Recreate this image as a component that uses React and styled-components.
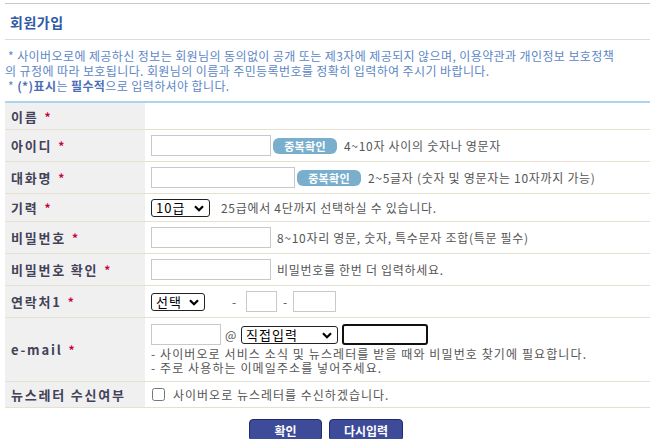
import React from 'react'
import styled, { createGlobalStyle } from 'styled-components'

const GlobalStyle = createGlobalStyle`
  body {
    margin: 0;
    background: #fff;
    font-family: "Noto Sans CJK KR", "Liberation Sans", sans-serif;
  }
`

const Page = styled.div`
  width: 645px;
  margin: 3px 0 0 5px;
  border-top: 1px solid #c8c8c8;
`

const TitleBar = styled.div`
  height: 35px;
  display: flex;
  align-items: center;
  padding-left: 5px;
  border-bottom: 1px solid #dcdcdc;

  h2 {
    margin: 0;
    font-size: 14px;
    letter-spacing: 0.5px;
    font-weight: bold;
    color: #2f5aa6;
  }
`

const Notice = styled.div`
  padding: 8px 0 8px 0;
  font-size: 12px;
  line-height: 15px;
  color: #5b87c6;
  white-space: nowrap;
  letter-spacing: 0.4px;

  b {
    font-weight: bold;
    color: #4a6fb5;
  }
`

const Table = styled.div`
  border-top: 2px solid #a9d6ea;
  display: grid;
  grid-template-columns: 140px 1fr;
`

const Label = styled.div`
  height: ${p => p.h}px;
  box-sizing: border-box;
  background: #f0f0f0;
  border-bottom: 1px solid #e6e0d2;
  display: flex;
  align-items: center;
  padding-left: 6px;
  font-size: 13px;
  font-weight: bold;
  letter-spacing: 1.8px;
  color: #424258;
  white-space: nowrap;
`

const Star = styled.span`
  color: #c8003c;
  margin-left: 6px;
  font-size: 12px;
`

const Cell = styled.div`
  height: ${p => p.h}px;
  border-bottom: 1px solid #e6e0d2;
  display: flex;
  align-items: ${p => (p.top ? 'flex-start' : 'center')};
  flex-direction: ${p => (p.top ? 'column' : 'row')};
  padding-left: 6px;
  padding-top: ${p => (p.top ? '6px' : '0')};
  box-sizing: border-box;
  font-size: 12px;
  letter-spacing: 0.7px;
  color: #555;
  white-space: nowrap;
`

const Line = styled.div`
  display: flex;
  align-items: center;
`

const Hint = styled.span`
  margin-left: ${p => p.gap || 6}px;
`

const TextBox = styled.input`
  width: ${p => p.w}px;
  height: 21px;
  box-sizing: border-box;
  border: 1px solid ${p => (p.focus ? '#111' : '#c9c9c9')};
  border-width: ${p => (p.focus ? '2px' : '1px')};
  border-radius: ${p => (p.focus ? '3px' : '0')};
  padding: 0 3px;
  outline: none;
  font-size: 12px;
`

const CheckButton = styled.button`
  height: 16px;
  width: 64px;
  margin-left: 2px;
  border: none;
  border-radius: 6px;
  background: #79afcd;
  color: #fff;
  font-family: inherit;
  font-size: 11px;
  font-weight: bold;
  letter-spacing: 0.3px;
  padding: 0;
  line-height: 16px;
`

const SelectWrap = styled.span`
  position: relative;
  display: inline-flex;
  width: ${p => p.w}px;
  height: 18px;
  box-sizing: border-box;
  border: 1px solid #222;
  border-radius: 3px;
  background: #fff;

  svg {
    position: absolute;
    right: 5px;
    top: 5px;
    pointer-events: none;
  }
`

const NativeSelect = styled.select`
  appearance: none;
  width: 100%;
  height: 100%;
  border: none;
  outline: none;
  background: transparent;
  padding: 0 0 0 4px;
  font-family: "Noto Sans CJK KR", sans-serif;
  font-size: 13px;
  line-height: 16px;
  letter-spacing: 1px;
  color: #000;
`

function Select({ w, value }) {
  return (
    <SelectWrap w={w}>
      <NativeSelect defaultValue={value}>
        <option>{value}</option>
      </NativeSelect>
      <svg width="10" height="7" viewBox="0 0 10 7">
        <path d="M1 1.2 L5 5.2 L9 1.2" fill="none" stroke="#000" strokeWidth="2.2" />
      </svg>
    </SelectWrap>
  )
}

const Dash = styled.span`
  margin-left: ${p => p.l}px;
  margin-right: ${p => p.r}px;
  color: #555;
`

const EmailNote = styled.div`
  margin-top: 2px;
  line-height: 14px;
  letter-spacing: 1.1px;
`

const Check = styled.input`
  width: 13px;
  height: 13px;
  margin: 0 8px 0 1px;
`

const CheckText = styled.span`
  letter-spacing: 1px;
`

const Actions = styled.div`
  display: flex;
  justify-content: center;
  gap: 7px;
  margin-top: 11px;
  padding-right: 3px;
`

const ActionButton = styled.button`
  width: ${p => p.w}px;
  height: 22px;
  border: 1px solid #1f2b6b;
  border-radius: 4px;
  background: #3d4b99;
  color: #fff;
  font-family: inherit;
  font-size: 12px;
  font-weight: bold;
  padding: 0;
`

function Row({ label, star = true, h, top, children }) {
  return (
    <>
      <Label h={h}>
        {label}
        {star && <Star>*</Star>}
      </Label>
      <Cell h={h} top={top}>{children}</Cell>
    </>
  )
}

export default function App() {
  return (
    <>
      <GlobalStyle />
      <Page>
        <TitleBar>
          <h2>회원가입</h2>
        </TitleBar>
        <Notice>
          &nbsp;* 사이버오로에 제공하신 정보는 회원님의 동의없이 공개 또는 제3자에 제공되지 않으며, 이용약관과 개인정보 보호정책
          <br />
          의 규정에 따라 보호됩니다. 회원님의 이름과 주민등록번호를 정확히 입력하여 주시기 바랍니다.
          <br />
          &nbsp;* <b>(*)표시</b>는 <b>필수적</b>으로 입력하셔야 합니다.
        </Notice>
        <Table>
          <Row label="이름" h={27} />
          <Row label="아이디" h={32}>
            <TextBox w={120} />
            <CheckButton>중복확인</CheckButton>
            <Hint gap={7}>4~10자 사이의 숫자나 영문자</Hint>
          </Row>
          <Row label="대화명" h={32}>
            <TextBox w={144} />
            <CheckButton>중복확인</CheckButton>
            <Hint gap={7}>2~5글자 (숫자 및 영문자는 10자까지 가능)</Hint>
          </Row>
          <Row label="기력" h={28}>
            <Select w={59} value="10급" />
            <Hint gap={11}>25급에서 4단까지 선택하실 수 있습니다.</Hint>
          </Row>
          <Row label="비밀번호" h={32}>
            <TextBox w={120} type="password" />
            <Hint>8~10자리 영문, 숫자, 특수문자 조합(특문 필수)</Hint>
          </Row>
          <Row label="비밀번호 확인" h={32}>
            <TextBox w={120} type="password" />
            <Hint>비밀번호를 한번 더 입력하세요.</Hint>
          </Row>
          <Row label="연락처1" h={32}>
            <Select w={54} value="선택" />
            <Dash l={27} r={9}>-</Dash>
            <TextBox w={31} />
            <Dash l={6} r={5}>-</Dash>
            <TextBox w={43} />
          </Row>
          <Row label="e-mail" h={64} top>
            <Line>
              <TextBox w={70} />
              <Dash l={4} r={4}>@</Dash>
              <Select w={97} value="직접입력" />
              <Dash l={2} r={2} />
              <TextBox w={86} focus />
            </Line>
            <EmailNote>
              - 사이버오로 서비스 소식 및 뉴스레터를 받을 때와 비밀번호 찾기에 필요합니다.
              <br />
              - 주로 사용하는 이메일주소를 넣어주세요.
            </EmailNote>
          </Row>
          <Row label="뉴스레터 수신여부" star={false} h={26}>
            <Check type="checkbox" />
            <CheckText>사이버오로 뉴스레터를 수신하겠습니다.</CheckText>
          </Row>
        </Table>
        <Actions>
          <ActionButton w={73}>확인</ActionButton>
          <ActionButton w={74}>다시입력</ActionButton>
        </Actions>
      </Page>
    </>
  )
}
